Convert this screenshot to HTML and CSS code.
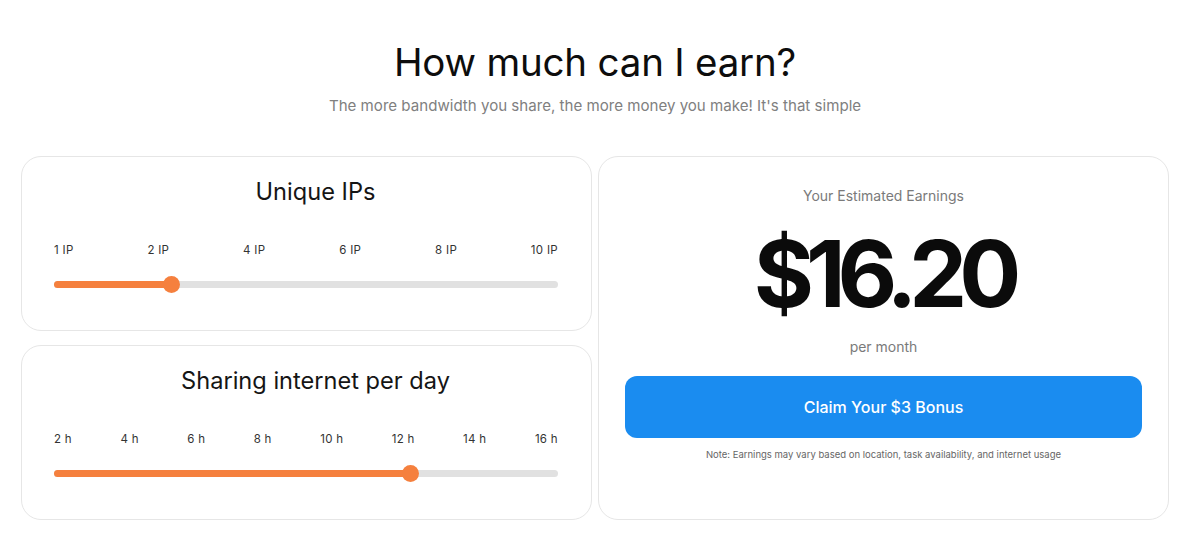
FILE: index.html
```html
<!DOCTYPE html>
<html lang="en">
<head>
<meta charset="utf-8">
<title>How much can I earn?</title>
<link rel="stylesheet" href="styles.css">
</head>
<body>
<main class="page">
  <header class="intro">
    <h1 class="headline">How much can I earn?</h1>
    <p class="lead">The more bandwidth you share, the more money you make! It's that simple</p>
  </header>
  <section class="calc">
    <div class="inputs">
      <div class="card slider-card">
        <h2 class="card-title">Unique IPs</h2>
        <div class="ticks">
          <span>1 IP</span><span>2 IP</span><span>4 IP</span><span>6 IP</span><span>8 IP</span><span>10 IP</span>
        </div>
        <div class="track">
          <div class="fill" style="width:23.3%"></div>
          <div class="thumb" style="left:23.3%"></div>
        </div>
      </div>
      <div class="card slider-card">
        <h2 class="card-title">Sharing internet per day</h2>
        <div class="ticks">
          <span>2 h</span><span>4 h</span><span>6 h</span><span>8 h</span><span>10 h</span><span>12 h</span><span>14 h</span><span>16 h</span>
        </div>
        <div class="track">
          <div class="fill" style="width:70.8%"></div>
          <div class="thumb" style="left:70.8%"></div>
        </div>
      </div>
    </div>
    <div class="card result">
      <p class="result-label">Your Estimated Earnings</p>
      <p class="amount">$16.20</p>
      <p class="period">per month</p>
      <button class="cta" type="button">Claim Your $3 Bonus</button>
      <p class="note">Note: Earnings may vary based on location, task availability, and internet usage</p>
    </div>
  </section>
</main>
</body>
</html>
```

FILE: styles.css
```css
* { box-sizing: border-box; }
html, body { margin: 0; padding: 0; background: #ffffff; }
body {
  font-family: Inter, "Liberation Sans", Arial, sans-serif;
  color: #111;
}
.page {
  width: 1148px;
  margin-left: 21px;
  padding-top: 36px;
}
.intro { text-align: center; }
.headline {
  margin: 0;
  font-size: 38.5px;
  line-height: 52px;
  font-weight: 400;
  color: #0d0d0d;
  letter-spacing: -0.2px;
}
.lead {
  margin: 8px 0 0;
  font-size: 15.1px;
  line-height: 20px;
  color: #808080;
  font-weight: 400;
}
.calc {
  margin-top: 40px;
  display: grid;
  grid-template-columns: 571px 571px;
  column-gap: 6px;
}
.inputs {
  display: flex;
  flex-direction: column;
  gap: 14px;
}
.card {
  border: 1px solid #e6e6e6;
  border-radius: 20px;
  background: #fff;
}
.slider-card {
  height: 175px;
  padding: 19px 33px 0 32px;
}
.card-title {
  margin: 0;
  padding-left: 19px;
  text-align: center;
  font-size: 23.6px;
  line-height: 32px;
  font-weight: 400;
  color: #151515;
}
.ticks {
  margin-top: 34px;
  display: flex;
  justify-content: space-between;
  font-size: 11.5px;
  line-height: 16px;
  color: #333;
  letter-spacing: 0.3px;
}
.track {
  position: relative;
  margin-top: 23px;
  height: 7px;
  border-radius: 4px;
  background: #e1e1e1;
}
.fill {
  height: 100%;
  border-radius: 4px;
  background: #f5803e;
}
.thumb {
  position: absolute;
  top: 50%;
  width: 17px;
  height: 17px;
  margin: -8.5px 0 0 -8.5px;
  border-radius: 50%;
  background: #f5803e;
}
.result {
  display: flex;
  flex-direction: column;
  align-items: center;
  padding: 30px 26px 0;
}
.result-label {
  margin: 0;
  font-size: 14px;
  line-height: 18px;
  color: #7a7a7a;
}
.amount {
  margin: 14px 0 0;
  font-size: 92px;
  line-height: 110px;
  font-weight: 700;
  letter-spacing: -8px;
  color: #0b0b0b;
}
.period {
  margin: 9px 0 0;
  font-size: 14px;
  line-height: 18px;
  color: #7a7a7a;
}
.cta {
  margin-top: 20px;
  width: 100%;
  height: 62px;
  border: none;
  border-radius: 12px;
  background: #1a8cf0;
  color: #fff;
  font-family: inherit;
  font-size: 16px;
  font-weight: 500;
  cursor: pointer;
}
.note {
  margin: 11px 0 0;
  font-size: 9.5px;
  line-height: 12px;
  color: #666;
}
```
